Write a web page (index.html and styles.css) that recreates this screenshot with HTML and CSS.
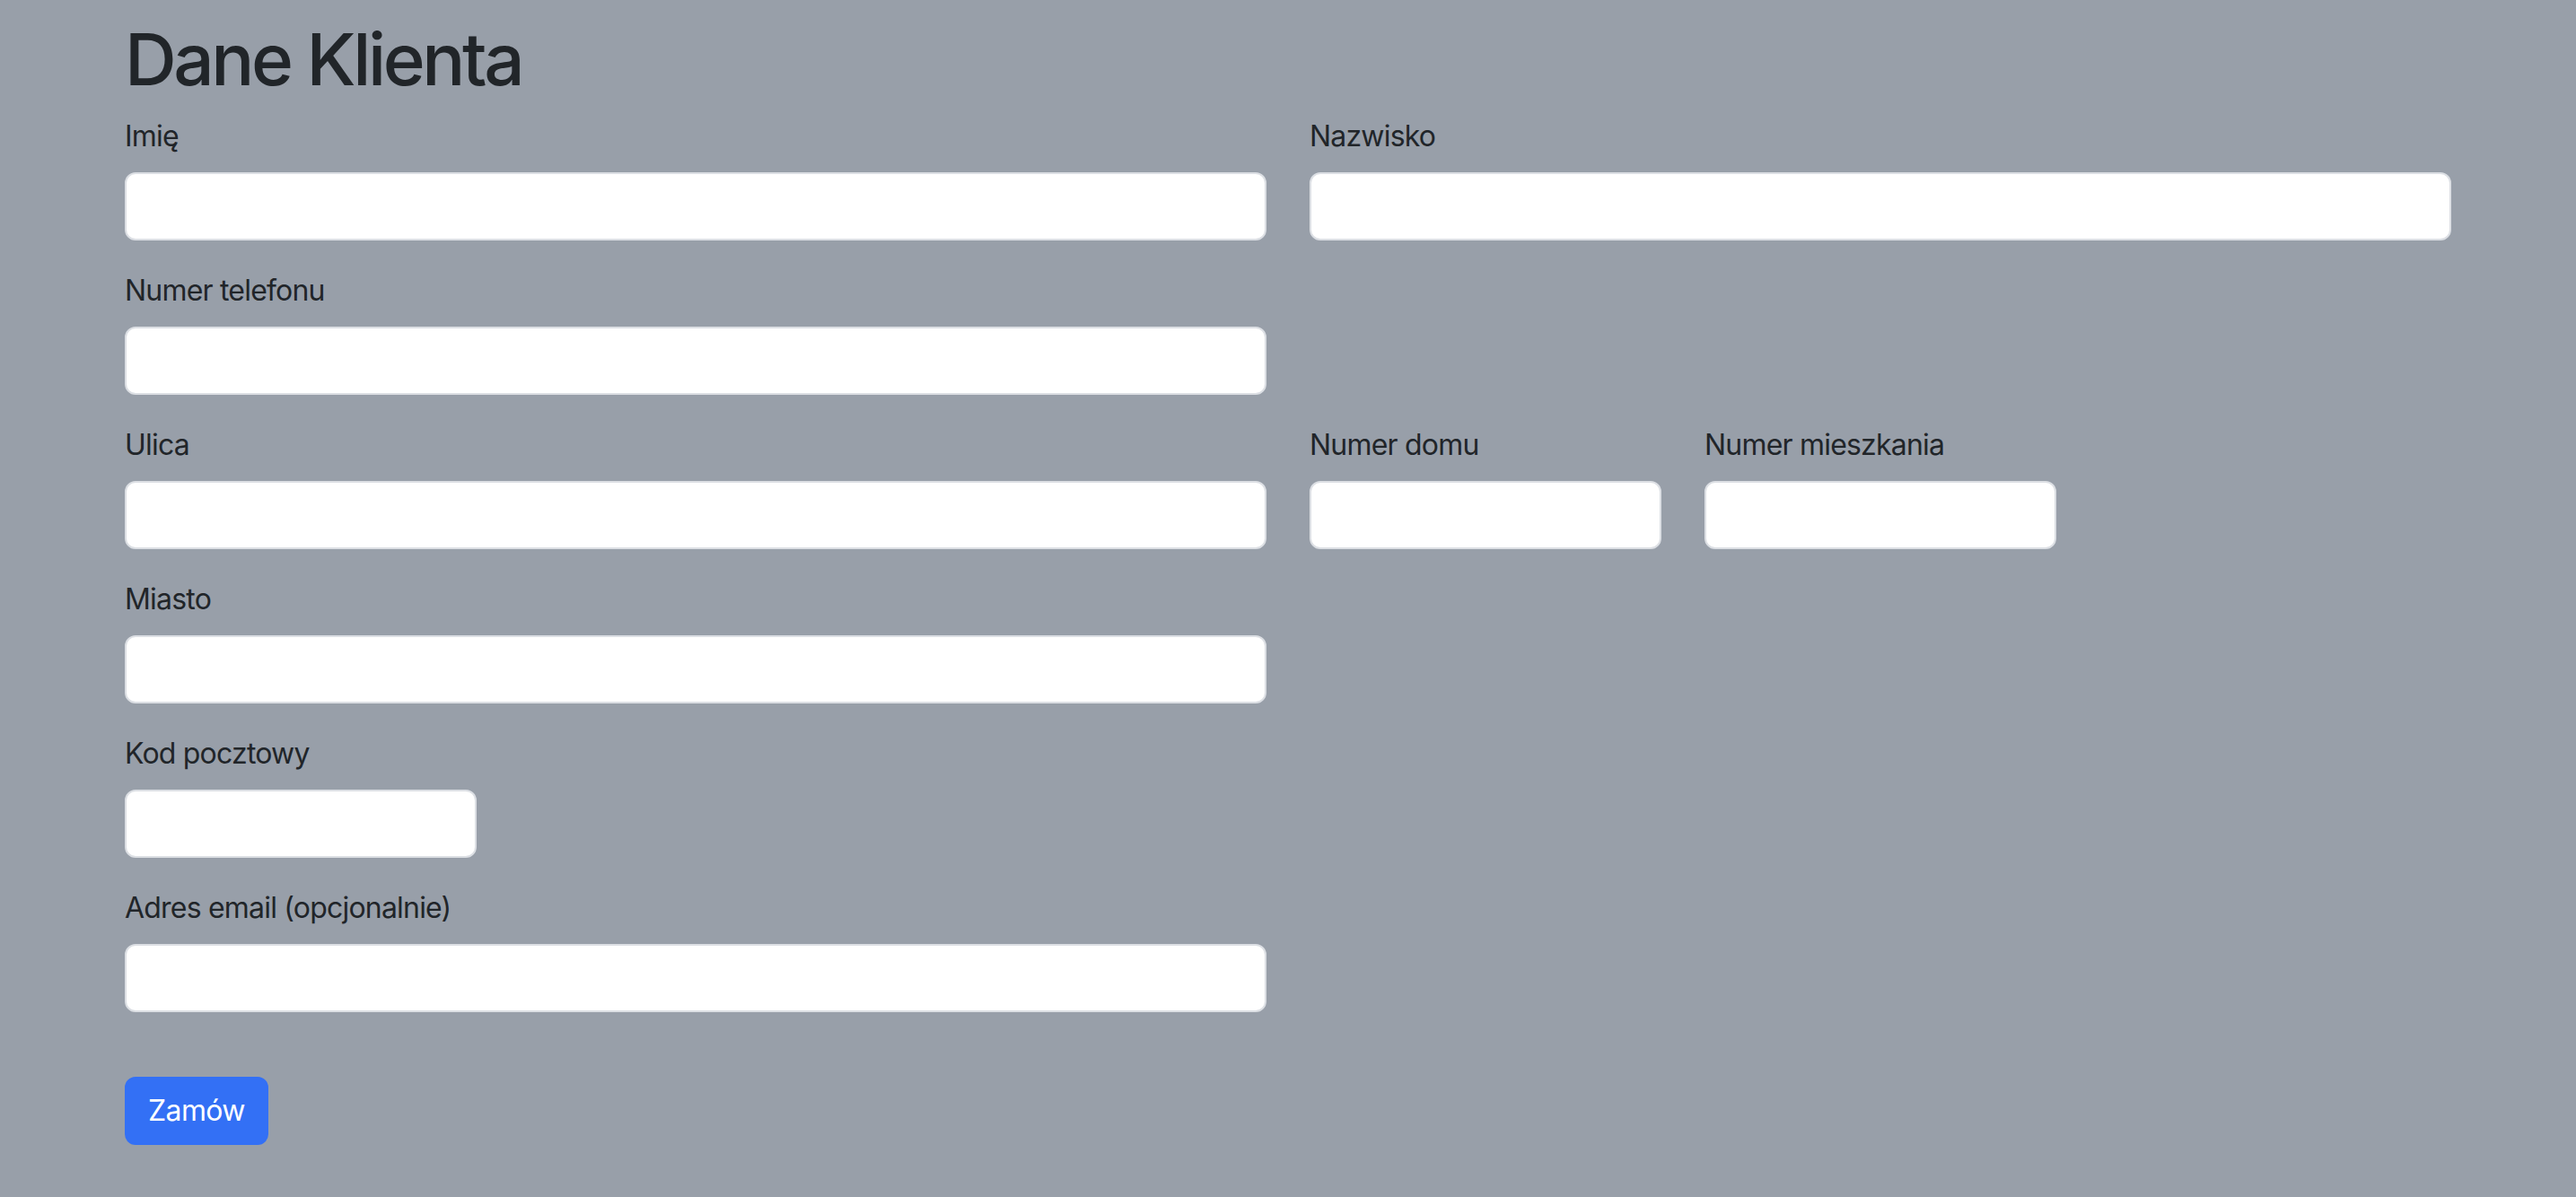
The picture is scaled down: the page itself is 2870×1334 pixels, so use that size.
FILE: index.html
```html
<!DOCTYPE html>
<html lang="pl">
<head>
    <meta charset="UTF-8">
    <meta name="viewport" content="width=device-width, initial-scale=1.0">
    <title>Dane Klienta</title>
    <link rel="stylesheet" href="styles.css">
</head>
<body>
    <div class="container">
        <h1>Dane Klienta</h1>
        <form id="customerForm">
            <div class="row">
                <div class="field col-6">
                    <label for="first_name">Imię</label>
                    <input type="text" id="first_name" name="first_name">
                </div>
                <div class="field col-6">
                    <label for="last_name">Nazwisko</label>
                    <input type="text" id="last_name" name="last_name">
                </div>
            </div>

            <div class="row">
                <div class="field col-6">
                    <label for="phone">Numer telefonu</label>
                    <input type="tel" id="phone" name="phone">
                </div>
            </div>

            <div class="row">
                <div class="field col-6">
                    <label for="street">Ulica</label>
                    <input type="text" id="street" name="street">
                </div>
                <div class="field col-2">
                    <label for="house_no">Numer domu</label>
                    <input type="text" id="house_no" name="house_no">
                </div>
                <div class="field col-2">
                    <label for="flat_no">Numer mieszkania</label>
                    <input type="text" id="flat_no" name="flat_no">
                </div>
            </div>

            <div class="row">
                <div class="field col-6">
                    <label for="city">Miasto</label>
                    <input type="text" id="city" name="city">
                </div>
            </div>

            <div class="row">
                <div class="field col-2">
                    <label for="postal_code">Kod pocztowy</label>
                    <input type="text" id="postal_code" name="postal_code">
                </div>
            </div>

            <div class="row">
                <div class="field col-6">
                    <label for="email">Adres email (opcjonalnie)</label>
                    <input type="email" id="email" name="email">
                </div>
            </div>

            <button type="submit" class="btn-primary">Zamów</button>
        </form>
    </div>
</body>
</html>
```

FILE: styles.css
```css
body {
    font-family: Inter, "Noto Sans", "Liberation Sans", sans-serif;
    background-color: #989fa9;
    color: #212529;
    margin: 0;
    padding: 0;
}

.container {
    max-width: 2640px;
    margin: 0 auto;
    padding: 18px 24px 0;
    box-sizing: border-box;
}

h1 {
    font-size: 80px;
    font-weight: 500;
    line-height: 1.2;
    margin: 0 0 14px;
    letter-spacing: -3.4px;
}

.row {
    display: grid;
    grid-template-columns: repeat(12, 1fr);
    column-gap: 48px;
}

.col-6 {
    grid-column: span 6;
}

.col-2 {
    grid-column: span 2;
}

.field {
    display: flex;
    flex-direction: column;
    margin-bottom: 32px;
}

label {
    font-size: 32px;
    line-height: 48px;
    margin-bottom: 16px;
    letter-spacing: -0.8px;
}

input {
    height: 76px;
    padding: 12px 24px;
    font-size: 32px;
    border: 2px solid #dcdfe4;
    border-radius: 12px;
    background-color: #ffffff;
    box-sizing: border-box;
}

input:focus {
    outline: none;
    border-color: #86b7fe;
}

.btn-primary {
    margin-top: 40px;
    height: 76px;
    padding: 12px 24px;
    font-family: inherit;
    font-size: 32px;
    line-height: 48px;
    letter-spacing: -0.6px;
    color: #ffffff;
    background-color: #3370f5;
    border: 2px solid #3370f5;
    border-radius: 12px;
    cursor: pointer;
}
```
